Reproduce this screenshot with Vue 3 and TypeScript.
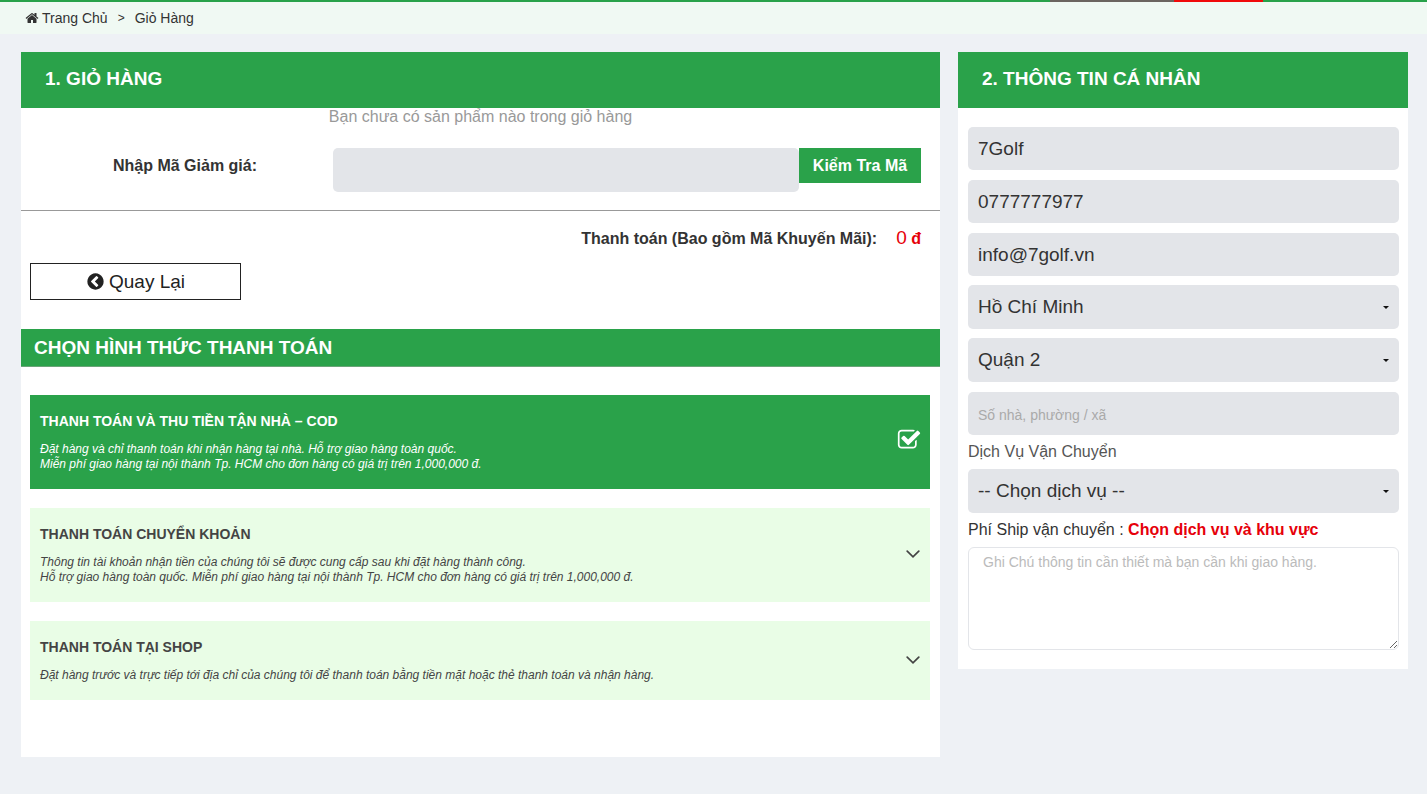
<script setup lang="ts">
import { ref } from 'vue'

interface PaymentOption {
  id: string
  title: string
  lines: string[]
}

const options: PaymentOption[] = [
  {
    id: 'cod',
    title: 'THANH TOÁN VÀ THU TIỀN TẬN NHÀ – COD',
    lines: [
      'Đặt hàng và chỉ thanh toán khi nhận hàng tại nhà. Hỗ trợ giao hàng toàn quốc.',
      'Miễn phí giao hàng tại nội thành Tp. HCM cho đơn hàng có giá trị trên 1,000,000 đ.',
    ],
  },
  {
    id: 'transfer',
    title: 'THANH TOÁN CHUYỂN KHOẢN',
    lines: [
      'Thông tin tài khoản nhận tiền của chúng tôi sẽ được cung cấp sau khi đặt hàng thành công.',
      'Hỗ trợ giao hàng toàn quốc. Miễn phí giao hàng tại nội thành Tp. HCM cho đơn hàng có giá trị trên 1,000,000 đ.',
    ],
  },
  {
    id: 'shop',
    title: 'THANH TOÁN TẠI SHOP',
    lines: [
      'Đặt hàng trước và trực tiếp tới địa chỉ của chúng tôi để thanh toán bằng tiền mặt hoặc thẻ thanh toán và nhận hàng.',
    ],
  },
]

const payment = ref('cod')
const coupon = ref('')
const name = ref('7Golf')
const phone = ref('0777777977')
const email = ref('info@7golf.vn')
const city = ref('hcm')
const district = ref('q2')
const address = ref('')
const service = ref('')
const note = ref('')
</script>

<template>
  <div class="page">
    <div class="strip"><i class="s1"></i><i class="s2"></i><i class="s3"></i><i class="s4"></i></div>
    <nav class="crumbs">
      <a href="#" class="crumb">
        <svg class="home" viewBox="0 0 1792 1792" aria-hidden="true"><path fill="currentColor" d="M1472 992v480q0 26-19 45t-45 19h-384v-384h-256v384h-384q-26 0-45-19t-19-45v-480q0-1 .5-3t.5-3l575-474 575 474q1 2 1 6zm223-69l-62 74q-8 9-21 11h-3q-13 0-21-7l-692-577-692 577q-12 8-24 7-13-2-21-11l-62-74q-8-10-7-23.5t11-21.5l719-599q32-26 76-26t76 26l244 204v-195q0-14 9-23t23-9h192q14 0 23 9t9 23v408l219 182q10 8 11 21.5t-7 23.5z" /></svg>
        <span>Trang Chủ</span>
      </a>
      <span class="sep">&gt;</span>
      <a href="#" class="crumb">Giỏ Hàng</a>
    </nav>

    <main class="columns">
      <section class="panel cart">
        <h2 class="head">1. GIỎ HÀNG</h2>
        <p class="empty">Bạn chưa có sản phẩm nào trong giỏ hàng</p>
        <form class="coupon" @submit.prevent>
          <label for="coupon">Nhập Mã Giảm giá:</label>
          <input id="coupon" v-model="coupon" class="field" type="text" />
          <button type="submit" class="check">Kiểm Tra Mã</button>
        </form>
        <div class="total">
          <span>Thanh toán (Bao gồm Mã Khuyến Mãi):</span>
          <span class="price"><span class="amount">0</span> đ</span>
        </div>
        <button type="button" class="back">
          <svg viewBox="0 0 1792 1792" aria-hidden="true"><path fill="currentColor" d="M1037 1395l102-102q19-19 19-45t-19-45l-307-307 307-307q19-19 19-45t-19-45l-102-102q-19-19-45-19t-45 19l-454 454q-19 19-19 45t19 45l454 454q19 19 45 19t45-19zm627-499q0 209-103 385.5t-279.5 279.5-385.5 103-385.5-103-279.5-279.5-103-385.5 103-385.5 279.5-279.5 385.5-103 385.5 103 279.5 279.5 103 385.5z" /></svg>
          Quay Lại
        </button>
        <h3 class="subhead">CHỌN HÌNH THỨC THANH TOÁN</h3>
        <div class="options">
          <label v-for="o in options" :key="o.id" class="option" :class="{ active: payment === o.id }">
            <input v-model="payment" class="radio" type="radio" name="payment" :value="o.id" />
            <span class="copy">
              <strong>{{ o.title }}</strong>
              <em v-for="line in o.lines" :key="line">{{ line }}</em>
            </span>
            <svg v-if="payment === o.id" class="tick" viewBox="0 0 1792 1792" aria-hidden="true"><path fill="currentColor" d="M1472 930v318q0 119-84.5 203.5t-203.5 84.5h-832q-119 0-203.5-84.5t-84.5-203.5v-832q0-119 84.5-203.5t203.5-84.5h832q63 0 117 25 15 7 18 23 3 17-9 29l-49 49q-10 10-23 10-3 0-9-2-23-6-45-6h-832q-66 0-113 47t-47 113v832q0 66 47 113t113 47h832q66 0 113-47t47-113v-254q0-13 9-22l64-64q10-10 23-10 6 0 12 3 20 8 20 29zm231-489l-814 814q-24 24-57 24t-57-24l-430-430q-24-24-24-57t24-57l110-110q24-24 57-24t57 24l263 263 647-647q24-24 57-24t57 24l110 110q24 24 24 57t-24 57z" /></svg>
            <svg v-else class="chevron" viewBox="0 0 14 8" aria-hidden="true"><path d="M1.2 1.2 7 6.8l5.800-5.600" fill="none" stroke="currentColor" stroke-width="1.700" stroke-linecap="round" /></svg>
          </label>
        </div>
      </section>

      <section class="panel info">
        <h2 class="head">2. THÔNG TIN CÁ NHÂN</h2>
        <form class="form" @submit.prevent>
          <div class="stack">
            <input v-model="name" class="field" type="text" aria-label="Họ tên" />
            <input v-model="phone" class="field" type="tel" aria-label="Điện thoại" />
            <input v-model="email" class="field" type="email" aria-label="Email" />
            <div class="select">
              <select v-model="city" class="field" aria-label="Tỉnh thành">
                <option value="hcm">Hồ Chí Minh</option>
              </select>
            </div>
            <div class="select">
              <select v-model="district" class="field" aria-label="Quận huyện">
                <option value="q2">Quận 2</option>
              </select>
            </div>
            <input v-model="address" class="field" type="text" placeholder="Số nhà, phường / xã" aria-label="Địa chỉ" />
          </div>
          <label class="caption muted" for="service">Dịch Vụ Vận Chuyển</label>
          <div class="select">
            <select id="service" v-model="service" class="field">
              <option value="">-- Chọn dịch vụ --</option>
            </select>
          </div>
          <p class="caption">Phí Ship vận chuyển : <strong>Chọn dịch vụ và khu vực</strong></p>
          <textarea v-model="note" class="note" placeholder="Ghi Chú thông tin cần thiết mà bạn cần khi giao hàng." aria-label="Ghi chú"></textarea>
        </form>
      </section>
    </main>
  </div>
</template>

<style>
body {
  margin: 0;
  background: #eef1f5;
}
</style>

<style scoped>
.page {
  min-height: 100vh;
  font-family: "Liberation Sans", Arial, sans-serif;
  font-size: 16px;
  color: #333;
}
.page *,
.page *::after {
  box-sizing: border-box;
}
.strip {
  display: flex;
  height: 2px;
}
.s1 { flex: 1050; background: #28a24a; }
.s2 { flex: 124; background: #6b6560; }
.s3 { flex: 89; background: #f00a0a; }
.s4 { flex: 164; background: #28a24a; }
.crumbs {
  display: flex;
  align-items: center;
  gap: 10px;
  height: 32px;
  padding: 0 25px;
  background: #f0f9f3;
  font-size: 14px;
}
.crumb {
  display: flex;
  align-items: center;
  gap: 3px;
  color: #333;
  text-decoration: none;
}
.home {
  width: 14px;
  height: 14px;
}
.sep {
  font-size: 12px;
}
.columns {
  display: grid;
  grid-template-columns: 919fr 450fr;
  align-items: start;
  gap: 18px;
  padding: 18px 19px 37px 21px;
}
.panel {
  background: #fff;
}
.head {
  display: flex;
  align-items: center;
  height: 56px;
  margin: 0;
  padding: 0 24px 2px;
  background: #2aa24a;
  color: #fff;
  font-size: 19px;
}
.cart {
  padding-bottom: 57px;
}
.empty {
  margin: 0;
  line-height: 18px;
  color: #999;
  text-align: center;
}
.coupon {
  display: flex;
  align-items: flex-start;
  margin-top: 22px;
  padding: 0 19px 18px 92px;
  border-bottom: 1px solid #999;
}
.coupon label {
  flex: 0 0 220px;
  line-height: 35px;
  font-weight: bold;
}
.field {
  display: block;
  width: 100%;
  height: 43px;
  margin: 0;
  padding: 0 10px;
  border: 0;
  border-radius: 5px;
  background: #e3e5e9;
  color: #333;
  font-family: inherit;
  font-size: 19px;
}
.field::placeholder {
  color: #aaa;
  font-size: 14px;
}
.coupon .field {
  flex: 1;
  min-width: 0;
  height: 44px;
}
.check {
  flex: 0 0 122px;
  height: 35px;
  padding: 0;
  border: 0;
  background: #2aa24a;
  color: #fff;
  font-family: inherit;
  font-size: 16px;
  font-weight: bold;
}
.total {
  display: flex;
  align-items: baseline;
  justify-content: flex-end;
  gap: 19px;
  height: 52px;
  padding: 16px 19px 0;
  font-weight: bold;
}
.price {
  color: #e6000a;
}
.amount {
  font-size: 19px;
  font-weight: normal;
}
.back {
  display: flex;
  align-items: center;
  justify-content: center;
  gap: 4px;
  width: 211px;
  height: 37px;
  margin-left: 9px;
  padding: 0;
  border: 1px solid #222;
  background: #fff;
  color: #222;
  font-family: inherit;
  font-size: 19px;
}
.back svg {
  width: 19px;
  height: 19px;
}
.subhead {
  display: flex;
  align-items: center;
  height: 38px;
  margin: 29px 0 28px;
  padding: 0 13px;
  border-bottom: 1px solid #6aa478;
  background: #2aa24a;
  color: #fff;
  font-size: 19px;
}
.options {
  display: grid;
  gap: 19px;
  padding: 0 10px 0 9px;
}
.option {
  display: flex;
  align-items: center;
  justify-content: space-between;
  padding: 17px 10px;
  background: #e9fde6;
  color: #444;
}
.radio {
  position: absolute;
  opacity: 0;
}
.option.active {
  padding-right: 9px;
  background: #2aa24a;
  color: #fff;
}
.copy strong {
  display: block;
  margin-bottom: 12px;
  font-size: 14px;
  line-height: 18px;
}
.copy em {
  display: block;
  font-size: 12px;
  line-height: 15px;
}
.tick {
  width: 24px;
  height: 24px;
  margin-bottom: 4px;
}
.chevron {
  width: 14px;
  height: 8px;
  margin-bottom: 2px;
}
.form {
  padding: 19px 9px 19px 10px;
}
.stack {
  display: grid;
  gap: 10px;
}
.select {
  position: relative;
}
.stack .select {
  margin-top: -1px;
}
.select::after {
  content: "";
  position: absolute;
  top: 21px;
  right: 10px;
  border: 3px solid transparent;
  border-top-color: #111;
  border-bottom: 0;
  pointer-events: none;
}
select.field {
  height: 44px;
  padding-bottom: 2px;
  appearance: none;
}
.caption {
  display: block;
  margin: 0;
  line-height: 34px;
}
.muted {
  color: #555;
}
.caption strong {
  color: #e6000a;
}
.note {
  display: block;
  width: 100%;
  height: 103px;
  margin: 0;
  padding: 6px 14px;
  border: 1px solid #e3e5e9;
  border-radius: 6px;
  background: #fff;
  color: #333;
  font-family: inherit;
  font-size: 14px;
  resize: vertical;
}
.note::placeholder {
  color: #bbb;
}
</style>
